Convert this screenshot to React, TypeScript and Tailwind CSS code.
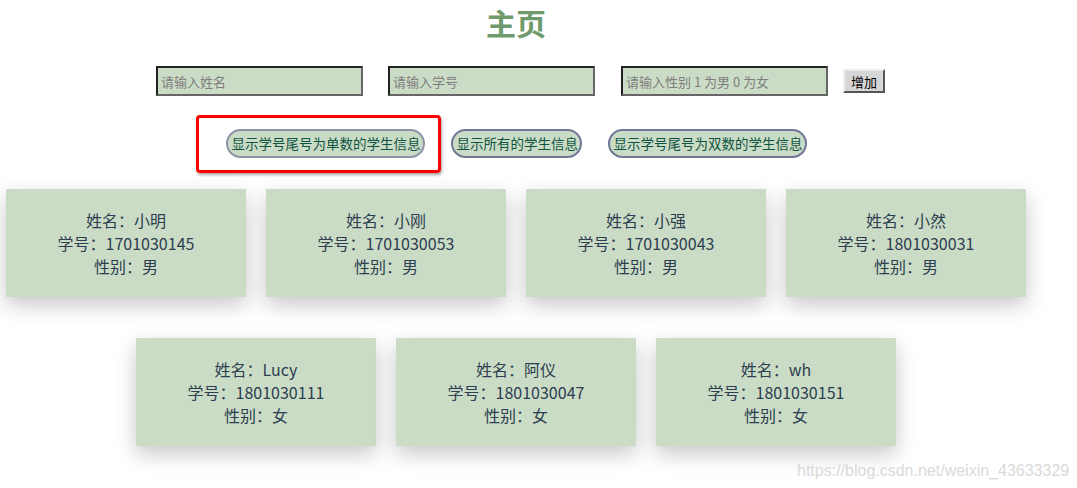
import React from 'react';

const students = [
  { name: '小明', id: '1701030145', sex: '男' },
  { name: '小刚', id: '1701030053', sex: '男' },
  { name: '小强', id: '1701030043', sex: '男' },
  { name: '小然', id: '1801030031', sex: '男' },
  { name: 'Lucy', id: '1801030111', sex: '女' },
  { name: '阿仪', id: '1801030047', sex: '女' },
  { name: 'wh', id: '1801030151', sex: '女' },
];

const font = { fontFamily: '"Noto Sans CJK SC", "Noto Sans", sans-serif' };

function StudentCard({ s }: { s: (typeof students)[number] }) {
  return (
    <div className="w-[240px] h-[108px] bg-[#cbdcc6] pt-[20px] text-center text-[16px] leading-[23px] text-[#2c3e50] shadow-[0_8px_20px_rgba(0,0,0,0.22)]">
      <div>姓名：{s.name}</div>
      <div>学号：{s.id}</div>
      <div>性别：{s.sex}</div>
    </div>
  );
}

const inputCls =
  'w-[207px] h-[30px] bg-[#cbdcc6] border-2 border-t-[#222] border-l-[#222] border-r-[#666] border-b-[#666] px-[3px] text-[13px] text-[#333] placeholder:text-[#7e7e7e] outline-none';

const pillCls =
  'h-[29px] whitespace-nowrap rounded-full border-2 border-[#6f7896] bg-[#cbdcc6] px-[4px] text-[13.5px] text-[#0f5443]';

export default function App() {
  return (
    <div className="relative w-[1077px] h-[488px] bg-white overflow-hidden" style={font}>
      <div className="w-[1032px]">
        <h1 className="pt-[3px] text-center text-[30px] leading-[38px] font-bold text-[#6f9a6c]">主页</h1>

        <div className="mt-[25px] flex items-center justify-center pl-[9px]">
          <input className={inputCls} placeholder="请输入姓名" />
          <input className={`${inputCls} ml-[25px]`} placeholder="请输入学号" />
          <input className={`${inputCls} ml-[26px]`} placeholder="请输入性别 1 为男 0 为女" />
          <button className="ml-[15px] w-[42px] h-[24px] bg-[#d6d6d6] border-2 border-t-[#eee] border-l-[#eee] border-r-[#555] border-b-[#555] text-[13px] leading-none text-black">
            增加
          </button>
        </div>

        <div className="mt-[33px] flex items-center justify-center gap-[26px]">
          <button className={`${pillCls} w-[199px] border-[#8d93a6]`}>显示学号尾号为单数的学生信息</button>
          <button className={`${pillCls} w-[131px]`}>显示所有的学生信息</button>
          <button className={`${pillCls} w-[199px]`}>显示学号尾号为双数的学生信息</button>
        </div>

        <div className="mt-[31px] flex flex-wrap justify-center gap-x-[20px] gap-y-[41px]">
          {students.map((s) => (
            <StudentCard key={s.id} s={s} />
          ))}
        </div>
      </div>

      {/* red annotation box */}
      <div className="absolute left-[196px] top-[115px] w-[245px] h-[58px] rounded-[4px] border-[3px] border-[#ff0000] shadow-[1px_2px_3px_rgba(0,0,0,0.35)]" />

      {/* watermark */}
      <div
        className="absolute left-[797px] top-[459px] text-[16px] text-[#dadada]"
        style={{ fontFamily: '"Liberation Sans", Arial, sans-serif' }}
      >
        https://blog.csdn.net/weixin_43633329
      </div>
    </div>
  );
}
